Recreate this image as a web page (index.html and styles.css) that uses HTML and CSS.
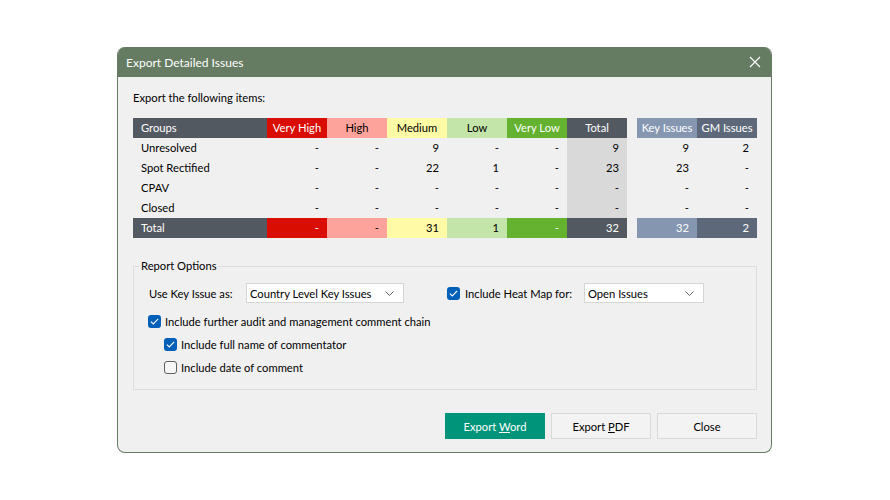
FILE: index.html
```html
<!DOCTYPE html>
<html>
<head>
<meta charset="utf-8">
<link rel="stylesheet" href="styles.css">
</head>
<body>
<div class="dialog">
  <div class="titlebar">
    <span class="title">Export Detailed Issues</span>
    <svg class="close-x" width="12" height="12" viewBox="0 0 12 12"><path d="M1 1 L11 11 M11 1 L1 11" stroke="#ffffff" stroke-width="1.1" fill="none"/></svg>
  </div>
  <div class="body">
    <div class="intro">Export the following items:</div>
    <div class="tables">
      <table class="grid main">
        <tr class="head">
          <th class="c-grp">Groups</th>
          <th class="c-vh">Very High</th>
          <th class="c-h">High</th>
          <th class="c-m">Medium</th>
          <th class="c-l">Low</th>
          <th class="c-vl">Very Low</th>
          <th class="c-dark">Total</th>
        </tr>
        <tr><td class="lbl">Unresolved</td><td>-</td><td>-</td><td>9</td><td>-</td><td>-</td><td class="tot">9</td></tr>
        <tr><td class="lbl">Spot Rectified</td><td>-</td><td>-</td><td>22</td><td>1</td><td>-</td><td class="tot">23</td></tr>
        <tr><td class="lbl">CPAV</td><td>-</td><td>-</td><td>-</td><td>-</td><td>-</td><td class="tot">-</td></tr>
        <tr><td class="lbl">Closed</td><td>-</td><td>-</td><td>-</td><td>-</td><td>-</td><td class="tot">-</td></tr>
        <tr class="foot">
          <td class="lbl c-dark">Total</td>
          <td class="c-vh">-</td>
          <td class="c-h">-</td>
          <td class="c-m">31</td>
          <td class="c-l">1</td>
          <td class="c-vl">-</td>
          <td class="c-dark">32</td>
        </tr>
      </table>
      <table class="grid side">
        <tr class="head">
          <th class="c-key">Key Issues</th>
          <th class="c-gm">GM Issues</th>
        </tr>
        <tr><td>9</td><td>2</td></tr>
        <tr><td>23</td><td>-</td></tr>
        <tr><td>-</td><td>-</td></tr>
        <tr><td>-</td><td>-</td></tr>
        <tr class="foot"><td class="c-key">32</td><td class="c-gm">2</td></tr>
      </table>
    </div>

    <fieldset class="options">
      <legend>Report Options</legend>
      <div class="row first">
        <span class="label-key">Use Key Issue as:</span>
        <div class="select sel-key">
          <span>Country Level Key Issues</span>
          <svg width="9" height="5" viewBox="0 0 9 5"><path d="M0.5 0.5 L4.5 4.5 L8.5 0.5" stroke="#606060" stroke-width="1" fill="none"/></svg>
        </div>
        <span class="check on"><svg width="9" height="7" viewBox="0 0 9 7"><path d="M0.8 3.6 L3.3 6 L8.2 0.8" stroke="#fff" stroke-width="1.1" fill="none"/></svg></span>
        <span class="label-heat">Include Heat Map for:</span>
        <div class="select sel-heat">
          <span>Open Issues</span>
          <svg width="9" height="5" viewBox="0 0 9 5"><path d="M0.5 0.5 L4.5 4.5 L8.5 0.5" stroke="#606060" stroke-width="1" fill="none"/></svg>
        </div>
      </div>
      <div class="row chk lvl1">
        <span class="check on"><svg width="9" height="7" viewBox="0 0 9 7"><path d="M0.8 3.6 L3.3 6 L8.2 0.8" stroke="#fff" stroke-width="1.1" fill="none"/></svg></span>
        <span>Include further audit and management comment chain</span>
      </div>
      <div class="row chk lvl2">
        <span class="check on"><svg width="9" height="7" viewBox="0 0 9 7"><path d="M0.8 3.6 L3.3 6 L8.2 0.8" stroke="#fff" stroke-width="1.1" fill="none"/></svg></span>
        <span>Include full name of commentator</span>
      </div>
      <div class="row chk lvl2">
        <span class="check off"></span>
        <span>Include date of comment</span>
      </div>
    </fieldset>

    <div class="buttons">
      <button class="btn primary">Export <u>W</u>ord</button>
      <button class="btn">Export <u>P</u>DF</button>
      <button class="btn">Close</button>
    </div>
  </div>
</div>
</body>
</html>
```

FILE: styles.css
```css
html, body {
  margin: 0;
  padding: 0;
  background: #ffffff;
}

body {
  font-family: Lato, "Noto Sans", sans-serif;
  font-size: 11.2px;
  color: #000;
}

.dialog {
  box-sizing: border-box;
  width: 655px;
  height: 406px;
  margin: 47px 0 0 117px;
  border: 1px solid #667c63;
  border-top: none;
  border-radius: 8px;
  background: #f0f0f0;
  overflow: hidden;
}

.titlebar {
  height: 30px;
  background: #657b62;
  color: #ffffff;
  display: flex;
  align-items: center;
  justify-content: space-between;
  padding: 0 10px 0 8px;
  font-size: 12px;
}

.close-x {
  display: block;
  margin-top: -1px;
}

.body {
  padding: 13px 14px 0 15px;
}

.intro {
  line-height: 16px;
}

.tables {
  display: flex;
  gap: 10px;
  margin-top: 12px;
}

.grid {
  border-collapse: collapse;
  border-spacing: 0;
}

.grid th, .grid td {
  height: 20px;
  padding: 0 8px;
  box-sizing: border-box;
  font-weight: normal;
  white-space: nowrap;
  line-height: 20px;
}

.grid td {
  text-align: right;
}

.grid th {
  text-align: center;
  width: 60px;
  padding: 0;
}

.grid .c-grp, .grid .lbl {
  text-align: left;
  width: 134px;
  padding-left: 8px;
}

.grid td.tot {
  background: #d9d9d9;
}

.c-grp, .c-dark {
  background: #535961;
  color: #ffffff;
}

.c-vh { background: #d90d02; color: #ffffff; }
.c-h { background: #fda39c; }
.c-m { background: #fffaa6; }
.c-l { background: #c4e5aa; }
.c-vl { background: #64b22f; color: #ffffff; }
.c-key { background: #8597b0; color: #ffffff; }
.c-gm { background: #5d697b; color: #ffffff; }

.side th {
  width: 60px;
}

.options {
  margin: 21px 0 0 0;
  padding: 10px 0 10px 0;
  border: 1px solid #dcdcdc;
  min-width: 0;
}

.options legend {
  padding: 0 2px;
  margin-left: 5px;
  line-height: 14px;
}

.row {
  display: flex;
  align-items: center;
}

.row.first {
  height: 20px;
  margin-left: 15px;
}

.label-key {
  width: 97px;
}

.select {
  box-sizing: border-box;
  height: 20px;
  background: #ffffff;
  border: 1px solid #d5d5d5;
  display: flex;
  align-items: center;
  justify-content: space-between;
  padding: 0 9px 0 3px;
}

.sel-key {
  width: 158px;
}

.sel-heat {
  width: 120px;
}

.check {
  box-sizing: border-box;
  width: 13px;
  height: 13px;
  border-radius: 3px;
  display: inline-flex;
  align-items: center;
  justify-content: center;
  flex: none;
}

.check.on {
  background: #005fb8;
}

.check.off {
  border: 1px solid #5e5e5e;
  background: #f6f6f6;
}

.sel-key + .check {
  margin-left: 43px;
}

.label-heat {
  margin-left: 5px;
  width: 119px;
}

.row.chk {
  height: 23px;
  gap: 4px;
}

.row.chk.lvl1 {
  margin-top: 7px;
  margin-left: 14px;
}

.row.chk.lvl2 {
  margin-left: 30px;
}

.buttons {
  display: flex;
  justify-content: flex-end;
  gap: 6px;
  margin-top: 23px;
}

.btn {
  box-sizing: border-box;
  width: 100px;
  height: 26px;
  font-family: Lato, "Noto Sans", sans-serif;
  font-size: 11.2px;
  background: #f3f3f3;
  border: 1px solid #d9d9d9;
  color: #000;
  padding: 0;
}

.btn.primary {
  background: #00957a;
  border-color: #00957a;
  color: #ffffff;
}
```
